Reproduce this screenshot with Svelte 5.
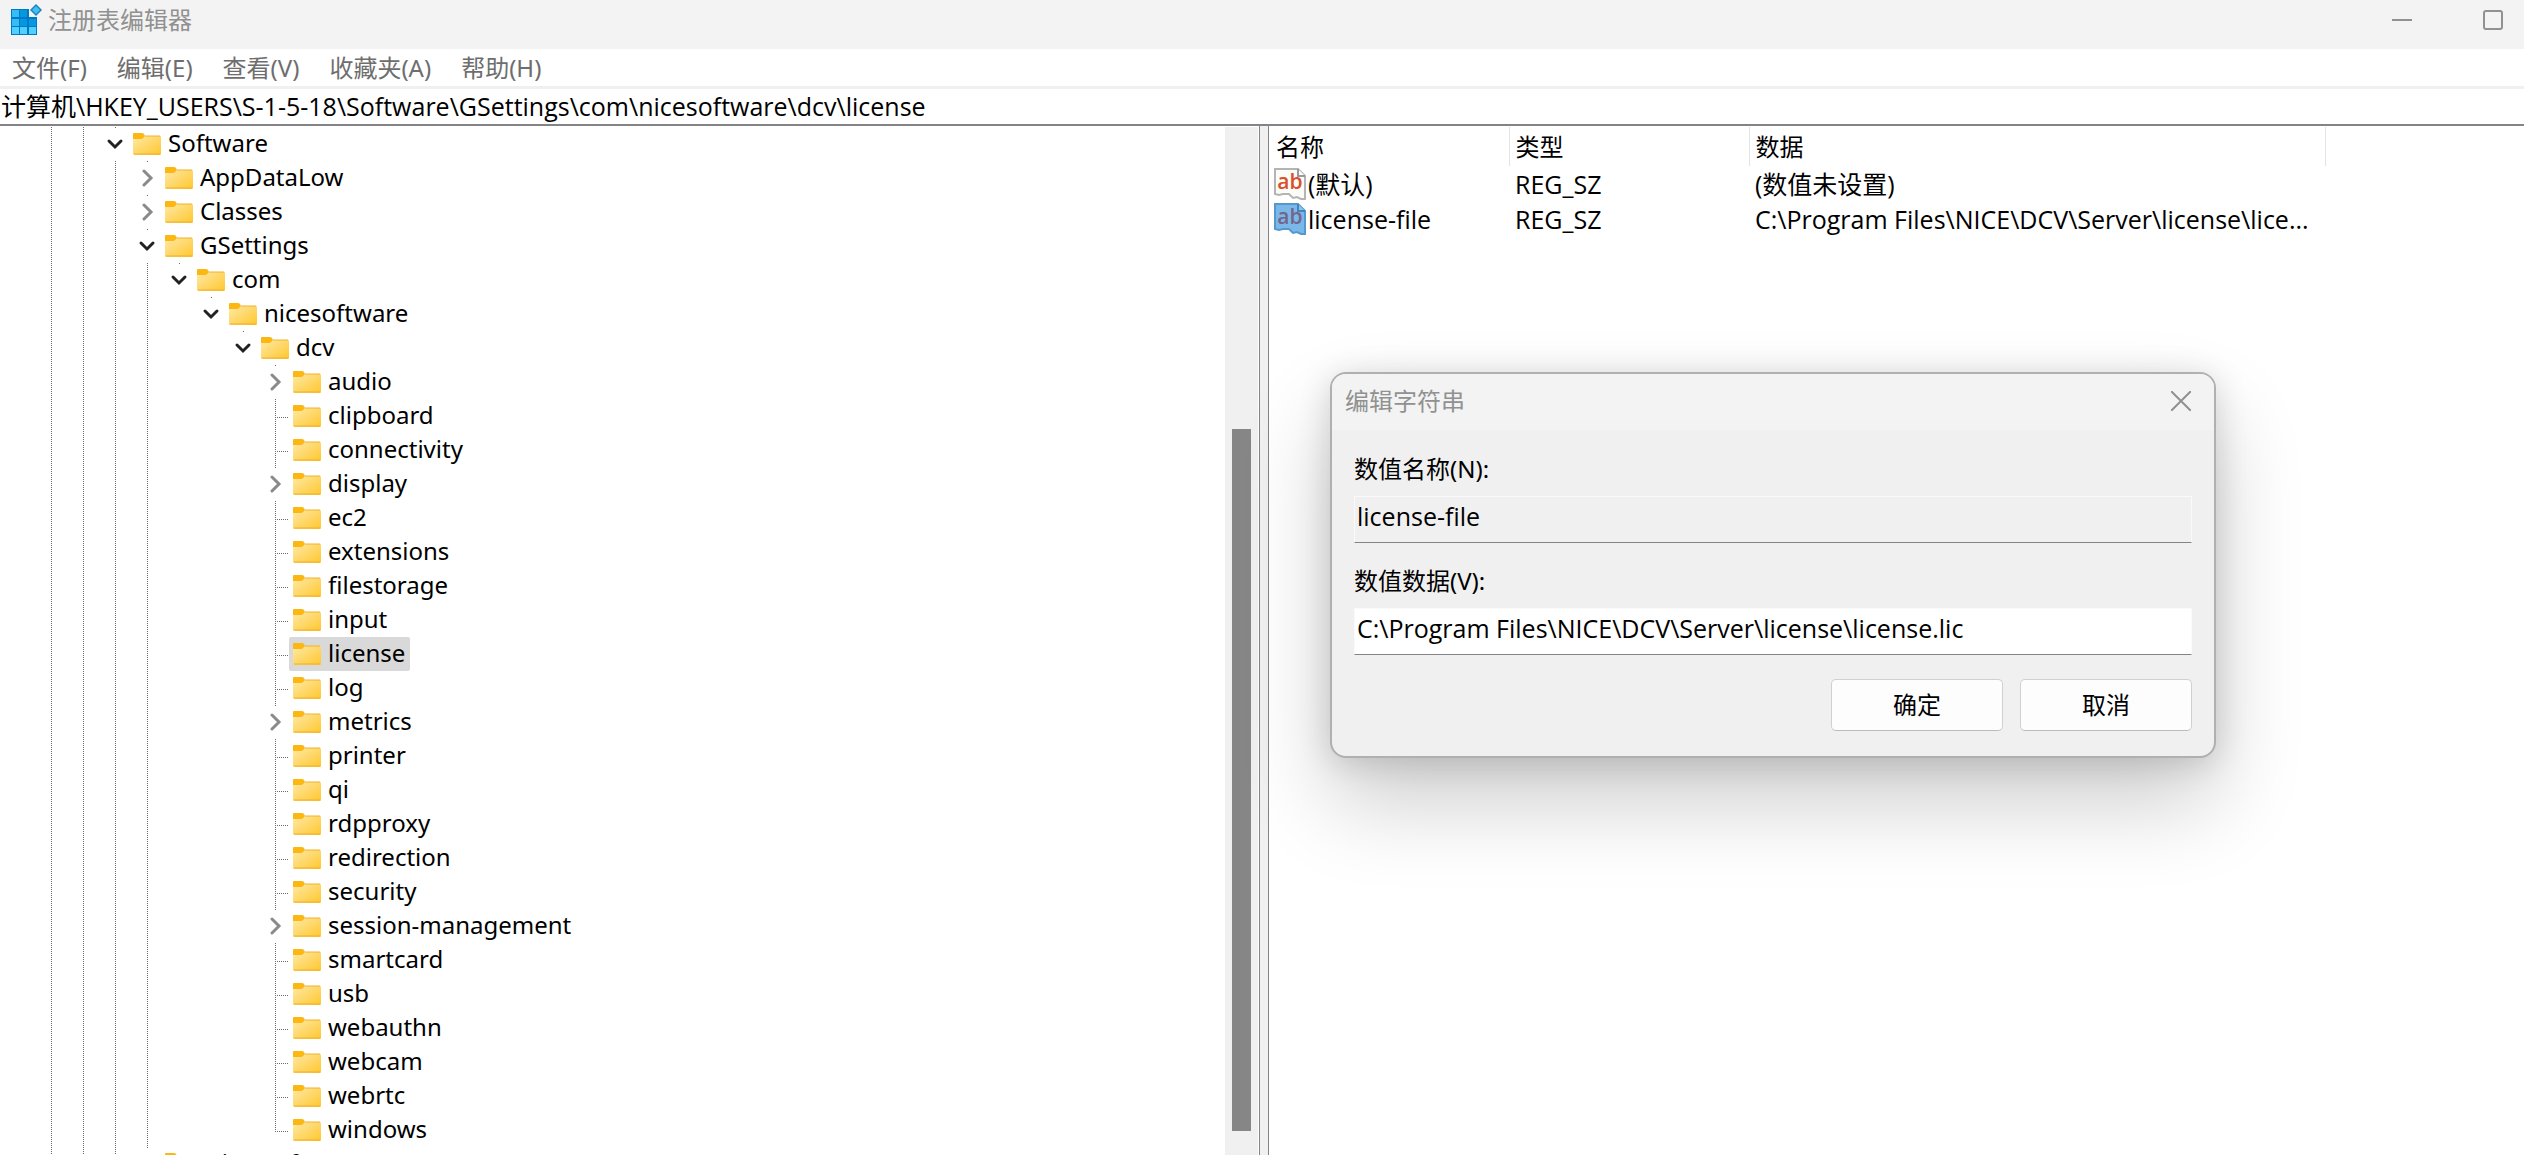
<script>
	// number of outer branches that still have siblings further down
	const openBranches = 4;

	const nodes = [
		{ name: 'Software', depth: 2, state: 'open' },
		{ name: 'AppDataLow', depth: 3, state: 'closed' },
		{ name: 'Classes', depth: 3, state: 'closed' },
		{ name: 'GSettings', depth: 3, state: 'open' },
		{ name: 'com', depth: 4, state: 'open' },
		{ name: 'nicesoftware', depth: 5, state: 'open' },
		{ name: 'dcv', depth: 6, state: 'open' },
		{ name: 'audio', depth: 7, state: 'closed' },
		{ name: 'clipboard', depth: 7 },
		{ name: 'connectivity', depth: 7 },
		{ name: 'display', depth: 7, state: 'closed' },
		{ name: 'ec2', depth: 7 },
		{ name: 'extensions', depth: 7 },
		{ name: 'filestorage', depth: 7 },
		{ name: 'input', depth: 7 },
		{ name: 'license', depth: 7 },
		{ name: 'log', depth: 7 },
		{ name: 'metrics', depth: 7, state: 'closed' },
		{ name: 'printer', depth: 7 },
		{ name: 'qi', depth: 7 },
		{ name: 'rdpproxy', depth: 7 },
		{ name: 'redirection', depth: 7 },
		{ name: 'security', depth: 7 },
		{ name: 'session-management', depth: 7, state: 'closed' },
		{ name: 'smartcard', depth: 7 },
		{ name: 'usb', depth: 7 },
		{ name: 'webauthn', depth: 7 },
		{ name: 'webcam', depth: 7 },
		{ name: 'webrtc', depth: 7 },
		{ name: 'windows', depth: 7, last: true },
		{ name: 'Microsoft', depth: 3, state: 'closed' }
	];

	const menus = ['文件(F)', '编辑(E)', '查看(V)', '收藏夹(A)', '帮助(H)'];

	const values = [
		{ name: '(默认)', type: 'REG_SZ', data: '(数值未设置)' },
		{
			name: 'license-file',
			type: 'REG_SZ',
			data: 'C:\\Program Files\\NICE\\DCV\\Server\\license\\lice...'
		}
	];

	let path = $state('计算机\\HKEY_USERS\\S-1-5-18\\Software\\GSettings\\com\\nicesoftware\\dcv\\license');
	let selected = $state('license');
	let selectedValue = $state('license-file');
	let valueData = $state('C:\\Program Files\\NICE\\DCV\\Server\\license\\license.lic');
</script>

<div class="window">
	<header class="titlebar">
		<svg class="app-icon" viewBox="0 0 32 32" aria-hidden="true">
			<path d="M1 5h18v8h8v18H1z" fill="#0078c8" />
			<path d="M2 6h7v7H2zM2 15h7v7H2zM10 15h7v7h-7z" fill="#35bdf5" />
			<path d="M10 6h7v7h-7zM10 15h7v7h-7zM19 15h7v7h-7z" fill="#0499dd" />
			<path d="M2 23h7v7H2zM10 23h7v7h-7zM19 23h7v7h-7z" fill="#50d0ff" />
			<path d="M26 0l6 6-6 6-6-6z" fill="#1683bd" />
			<path d="M26 2l4 4-4 4-4-4z" fill="#45bff0" />
		</svg>
		<h1>注册表编辑器</h1>
		<div class="window-buttons">
			<button aria-label="最小化"><svg viewBox="0 0 20 20"><path d="M0 10h20" /></svg></button>
			<button aria-label="最大化"
				><svg viewBox="0 0 20 20"><rect x="1" y="1" width="18" height="18" rx="2" /></svg></button
			>
		</div>
	</header>

	<nav>
		{#each menus as menu}
			<button>{menu}</button>
		{/each}
	</nav>

	<input class="address" aria-label="地址" bind:value={path} />

	<main>
		<div class="tree-pane">
			<ul class="tree">
				{#each nodes as node}
					<li>
						{#each { length: node.depth } as _, i}
							<span class="cell" class:line={i < openBranches}></span>
						{/each}
						{#if node.state}
							<button class="cell toggle {node.state}" aria-label="展开或折叠 {node.name}">
								{#if node.state === 'open'}
									<svg viewBox="0 0 18 18"><path d="M3 6l6 6 6-6" /></svg>
								{:else}
									<svg viewBox="0 0 18 18"><path d="M6 2l7 7-7 7" /></svg>
								{/if}
							</button>
						{:else}
							<span class="cell line branch" class:last={node.last}></span>
						{/if}
						<button
							class="key"
							class:selected={selected === node.name}
							onclick={() => (selected = node.name)}
						>
							<svg viewBox="0 0 28 22" aria-hidden="true">
								<path d="M0 1q0-1 1-1h8q1 0 2 1l1 2-2 5H0z" fill="#fcb713" />
								<path d="M0 6h8q2 0 3-2l1-1h15q1 0 1 1v17q0 1-1 1H1q-1 0-1-1z" fill="url(#folder)" />
								<path d="M12 3h15M1 21h26" stroke="#efb029" />
							</svg>
							<span>{node.name}</span>
						</button>
					</li>
				{/each}
			</ul>
			<div class="scrollbar"><div class="thumb"></div></div>
		</div>
		<div class="splitter"></div>

		<section class="values">
			<table>
				<thead>
					<tr>
						<th class="name">名称</th>
						<th class="type">类型</th>
						<th class="data">数据</th>
						<th></th>
					</tr>
				</thead>
				<tbody>
					{#each values as value}
						<tr
							class:picked={selectedValue === value.name}
							onclick={() => (selectedValue = value.name)}
						>
							<td class="first">
								<div>
									<svg viewBox="0 0 32 32" aria-hidden="true">
										<path
											class="paper"
											d="M1 1h23l7 7v23h-4l-4-2-4 1-4-4H9l-4 1-4-1z"
											stroke-width="2"
										/>
										<path class="fold" d="M24 1v7h7" stroke-width="2" />
										<text x="16" y="21" text-anchor="middle">ab</text>
									</svg>
									<span>{value.name}</span>
								</div>
							</td>
							<td>{value.type}</td>
							<td>{value.data}</td>
							<td></td>
						</tr>
					{/each}
				</tbody>
			</table>
		</section>
	</main>

	<div class="dialog" role="dialog" aria-labelledby="dialog-title">
		<div class="dialog-title">
			<h2 id="dialog-title">编辑字符串</h2>
			<button aria-label="关闭"><svg viewBox="0 0 20 20"><path d="M0 0l20 20M20 0L0 20" /></svg></button>
		</div>
		<form onsubmit={(e) => e.preventDefault()}>
			<label for="value-name">数值名称(N):</label>
			<input id="value-name" value="license-file" readonly />
			<label for="value-data">数值数据(V):</label>
			<input id="value-data" bind:value={valueData} />
			<div class="actions">
				<button type="submit">确定</button>
				<button type="button">取消</button>
			</div>
		</form>
	</div>

	<svg class="defs" aria-hidden="true">
		<linearGradient id="folder" x1="0" y1="0" x2="1" y2="1">
			<stop offset="0" stop-color="#ffe9a6" />
			<stop offset="1" stop-color="#ffc72f" />
		</linearGradient>
	</svg>
</div>

<style>
	.window {
		position: relative;
		display: flex;
		flex-direction: column;
		height: 100vh;
		overflow: hidden;
		background: #fff;
		color: #000;
		font: 24px/34px 'Noto Sans', 'Noto Sans CJK SC', sans-serif;
	}

	button,
	input {
		margin: 0;
		padding: 0;
		border: 0;
		background: none;
		color: inherit;
		font: inherit;
		outline: 0;
	}

	h1,
	h2 {
		margin: 0;
		color: #919191;
		font-size: 24px;
		font-weight: 400;
	}

	.address,
	td,
	form input {
		font-family: 'Open Sans', 'Noto Sans CJK SC', sans-serif;
		font-size: 25px;
	}

	.defs {
		position: absolute;
		width: 0;
		height: 0;
	}

	.titlebar {
		display: flex;
		flex: none;
		align-items: center;
		height: 40px;
		padding: 0 0 9px 10px;
		background: #f3f3f3;
	}

	.app-icon {
		width: 32px;
		height: 32px;
		margin-right: 6px;
	}

	.window-buttons {
		display: flex;
		gap: 29px;
		margin-left: auto;
	}

	.window-buttons button {
		width: 62px;
		height: 40px;
	}

	.window-buttons svg,
	.dialog-title svg {
		display: block;
		width: 20px;
		height: 20px;
		margin: auto;
		fill: none;
		stroke: #919191;
		stroke-width: 2;
	}

	nav {
		display: flex;
		flex: none;
		gap: 30px;
		height: 37px;
		padding-left: 12px;
		border-bottom: 3px solid #f0f0f0;
		color: #6e6e6e;
	}

	.address {
		flex: none;
		height: 33px;
		padding: 0 0 2px 1px;
		border-bottom: 2px solid #838388;
	}

	main {
		display: flex;
		flex: 1;
		min-height: 0;
	}

	.tree-pane {
		display: flex;
		flex: none;
		width: 50%;
		max-width: 1258px;
		padding-top: 1px;
	}

	.tree {
		flex: 1;
		margin: 0;
		padding: 0 0 0 33px;
		overflow: hidden;
		list-style: none;
	}

	li {
		display: flex;
		height: 34px;
	}

	.cell {
		position: relative;
		flex: none;
		width: 32px;
		height: 34px;
	}

	.line::before,
	.toggle::before {
		content: '';
		position: absolute;
		top: 0;
		left: 18px;
		width: 1px;
		height: 100%;
		background: repeating-linear-gradient(#6b6b6b 0 1px, transparent 1px 2px);
	}

	.toggle::before {
		height: 1px;
	}

	.branch.last::before {
		height: 18px;
	}

	.branch::after {
		content: '';
		position: absolute;
		top: 18px;
		left: 18px;
		width: 14px;
		height: 1px;
		background: repeating-linear-gradient(90deg, #6b6b6b 0 1px, transparent 1px 2px);
	}

	.toggle svg {
		display: block;
		width: 18px;
		height: 18px;
		margin-left: 9px;
		fill: none;
		stroke: #8a8a8a;
		stroke-width: 3;
		stroke-linecap: round;
	}

	.toggle.open svg {
		stroke: #222;
	}

	.key {
		display: flex;
		align-items: center;
		gap: 7px;
		height: 34px;
		padding: 0 5px 0 4px;
		border-radius: 2px;
		line-height: 32px;
	}

	.key svg {
		width: 28px;
		height: 22px;
	}

	.key span {
		padding-bottom: 2px;
	}

	.key.selected {
		background: #d9d9d9;
	}

	.scrollbar {
		display: flex;
		flex: none;
		flex-direction: column;
		align-items: center;
		width: 33px;
		background: #f0f0f0;
	}

	.thumb {
		width: 19px;
		height: 68.3%;
		margin: auto 0 24px;
		background: #868686;
	}

	.splitter {
		flex: none;
		width: 8px;
		margin-left: 1px;
		border: solid #838388;
		border-width: 0 1px;
		background: #f0f0f0;
	}

	.values {
		flex: 1;
		min-width: 0;
		padding: 1px 0 0 5px;
	}

	table {
		width: 100%;
		border-collapse: collapse;
		table-layout: fixed;
	}

	th {
		height: 39px;
		padding: 0 0 0 6px;
		border-right: 1px solid #e3e3e3;
		box-sizing: border-box;
		font-weight: 400;
		text-align: left;
		line-height: 38px;
	}

	th:last-child {
		border: 0;
	}

	.name {
		width: 235px;
		padding-left: 2px;
	}

	.type {
		width: 240px;
	}

	.data {
		width: 576px;
	}

	td {
		height: 35px;
		padding: 0 0 0 6px;
		white-space: nowrap;
	}

	td.first {
		padding: 0;
	}

	.first div {
		display: flex;
		align-items: center;
		gap: 2px;
	}

	.first svg {
		width: 32px;
		height: 32px;
	}

	.first text {
		fill: #d8502c;
		font: 600 21px 'Open Sans', sans-serif;
	}

	.paper {
		fill: #fbfbf8;
		stroke: #b4b4b4;
	}

	.fold {
		fill: #fff;
		stroke: #999;
	}

	.picked .paper {
		fill: #7bb8ea;
		stroke: #5599cc;
	}

	.picked .fold {
		fill: #8cc4f0;
		stroke: #4585b8;
	}

	.picked text {
		fill: #74658a;
	}

	.dialog {
		position: absolute;
		top: 372px;
		left: 1330px;
		box-sizing: border-box;
		width: 886px;
		border: 2px solid #b0b0b0;
		border-radius: 16px;
		background: #f0f0f0;
		box-shadow:
			0 44px 88px rgba(0, 0, 0, 0.2),
			0 4px 32px rgba(0, 0, 0, 0.15);
	}

	.dialog-title {
		display: flex;
		align-items: center;
		justify-content: space-between;
		height: 54px;
		padding: 0 0 2px 13px;
		border-radius: 14px 14px 0 0;
		background: #f3f3f3;
	}

	.dialog-title button {
		width: 66px;
		height: 50px;
	}

	form {
		display: flex;
		flex-direction: column;
		padding: 22px 22px 25px;
	}

	label {
		height: 34px;
		margin-bottom: 10px;
	}

	form input {
		height: 47px;
		margin-bottom: 21px;
		padding: 0 2px 7px;
		border: 1px solid #fafafa;
		border-bottom-color: #838388;
		box-sizing: border-box;
	}

	#value-data {
		background: #fff;
	}

	.actions {
		display: flex;
		justify-content: flex-end;
		gap: 17px;
		margin-top: 3px;
	}

	.actions button {
		width: 172px;
		height: 52px;
		border: 1px solid #d0d0d0;
		border-bottom-color: #bbb;
		border-radius: 5px;
		background: #fdfdfd;
	}
</style>
